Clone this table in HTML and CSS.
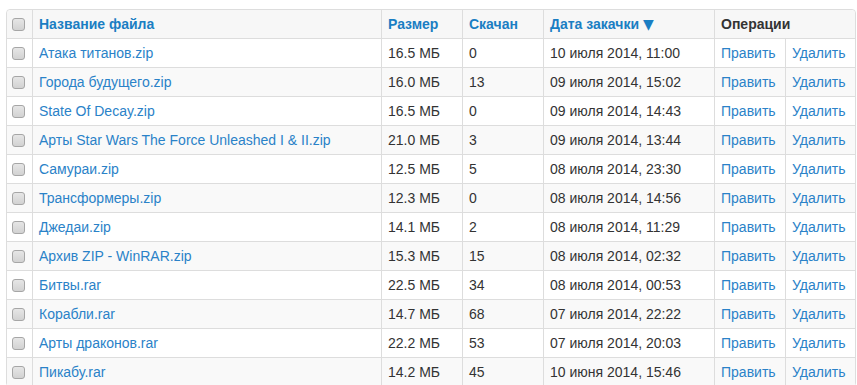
FILE: index.html
```html
<!DOCTYPE html>
<html lang="ru">
<head>
<meta charset="utf-8">
<link rel="stylesheet" href="styles.css">
</head>
<body>
<table class="files">
  <colgroup>
    <col class="c-check"><col class="c-name"><col class="c-size"><col class="c-dl"><col class="c-date"><col class="c-edit"><col class="c-del">
  </colgroup>
  <thead>
    <tr>
      <th class="chk"><input type="checkbox" class="box"></th>
      <th><a href="#">Название файла</a></th>
      <th><a href="#">Размер</a></th>
      <th><a href="#">Скачан</a></th>
      <th><a href="#">Дата закачки <span class="arrow">▼</span></a></th>
      <th colspan="2" class="ops">Операции</th>
    </tr>
  </thead>
  <tbody>
    <tr><td class="chk"><input type="checkbox" class="box"></td><td><a href="#">Атака титанов.zip</a></td><td>16.5 МБ</td><td>0</td><td>10 июля 2014, 11:00</td><td><a href="#">Править</a></td><td><a href="#">Удалить</a></td></tr>
    <tr><td class="chk"><input type="checkbox" class="box"></td><td><a href="#">Города будущего.zip</a></td><td>16.0 МБ</td><td>13</td><td>09 июля 2014, 15:02</td><td><a href="#">Править</a></td><td><a href="#">Удалить</a></td></tr>
    <tr><td class="chk"><input type="checkbox" class="box"></td><td><a href="#">State Of Decay.zip</a></td><td>16.5 МБ</td><td>0</td><td>09 июля 2014, 14:43</td><td><a href="#">Править</a></td><td><a href="#">Удалить</a></td></tr>
    <tr><td class="chk"><input type="checkbox" class="box"></td><td><a href="#">Арты Star Wars The Force Unleashed I &amp; II.zip</a></td><td>21.0 МБ</td><td>3</td><td>09 июля 2014, 13:44</td><td><a href="#">Править</a></td><td><a href="#">Удалить</a></td></tr>
    <tr><td class="chk"><input type="checkbox" class="box"></td><td><a href="#">Самураи.zip</a></td><td>12.5 МБ</td><td>5</td><td>08 июля 2014, 23:30</td><td><a href="#">Править</a></td><td><a href="#">Удалить</a></td></tr>
    <tr><td class="chk"><input type="checkbox" class="box"></td><td><a href="#">Трансформеры.zip</a></td><td>12.3 МБ</td><td>0</td><td>08 июля 2014, 14:56</td><td><a href="#">Править</a></td><td><a href="#">Удалить</a></td></tr>
    <tr><td class="chk"><input type="checkbox" class="box"></td><td><a href="#">Джедаи.zip</a></td><td>14.1 МБ</td><td>2</td><td>08 июля 2014, 11:29</td><td><a href="#">Править</a></td><td><a href="#">Удалить</a></td></tr>
    <tr><td class="chk"><input type="checkbox" class="box"></td><td><a href="#">Архив ZIP - WinRAR.zip</a></td><td>15.3 МБ</td><td>15</td><td>08 июля 2014, 02:32</td><td><a href="#">Править</a></td><td><a href="#">Удалить</a></td></tr>
    <tr><td class="chk"><input type="checkbox" class="box"></td><td><a href="#">Битвы.rar</a></td><td>22.5 МБ</td><td>34</td><td>08 июля 2014, 00:53</td><td><a href="#">Править</a></td><td><a href="#">Удалить</a></td></tr>
    <tr><td class="chk"><input type="checkbox" class="box"></td><td><a href="#">Корабли.rar</a></td><td>14.7 МБ</td><td>68</td><td>07 июля 2014, 22:22</td><td><a href="#">Править</a></td><td><a href="#">Удалить</a></td></tr>
    <tr><td class="chk"><input type="checkbox" class="box"></td><td><a href="#">Арты драконов.rar</a></td><td>22.2 МБ</td><td>53</td><td>07 июля 2014, 20:03</td><td><a href="#">Править</a></td><td><a href="#">Удалить</a></td></tr>
    <tr><td class="chk"><input type="checkbox" class="box"></td><td><a href="#">Пикабу.rar</a></td><td>14.2 МБ</td><td>45</td><td>10 июня 2014, 15:46</td><td><a href="#">Править</a></td><td><a href="#">Удалить</a></td></tr>
  </tbody>
</table>
</body>
</html>
```
FILE: styles.css
```css
html, body {
  margin: 0;
  padding: 0;
  background: #fff;
}
body {
  padding: 9px 0 0 6px;
  font-family: "Liberation Sans", Arial, sans-serif;
  font-size: 14px;
  color: #333;
}
.files {
  width: 850px;
  table-layout: fixed;
  border-collapse: separate;
  border-spacing: 0;
  border: 1px solid #ddd;
  border-radius: 4px;
}
.c-check { width: 25px; }
.c-name { width: 349px; }
.c-size { width: 81px; }
.c-dl { width: 81px; }
.c-date { width: 171px; }
.c-edit { width: 71px; }
.c-del { width: 70px; }

.files th,
.files td {
  height: 28px;
  padding: 0 6px;
  line-height: 20px;
  text-align: left;
  vertical-align: middle;
  white-space: nowrap;
  overflow: hidden;
  border-left: 1px solid #ddd;
  box-sizing: border-box;
}
.files td {
  border-top: 1px solid #ddd;
  height: 29px;
}
.files th:first-child,
.files td:first-child {
  border-left: none;
}
.files th {
  background: #f7f7f7;
  font-weight: bold;
}
.files th:first-child { border-top-left-radius: 4px; }
.files th:last-child { border-top-right-radius: 4px; }
.files tbody tr:nth-child(even) td {
  background: #f9f9f9;
}
.files a {
  color: #2a82c8;
  text-decoration: none;
}
.files th a {
  color: #1a7ec3;
}
.files th.ops {
  color: #333;
}
.arrow {
  font-size: 14px;
  font-family: "DejaVu Sans", sans-serif;
}
.files .chk {
  padding: 0;
  text-align: center;
}
.box {
  appearance: none;
  -webkit-appearance: none;
  display: block;
  width: 13px;
  height: 13px;
  margin: 0 0 0 5px;
  border: 1px solid #a6a6a6;
  border-radius: 3px;
  background: linear-gradient(#e6e6e6, #d2d2d2);
  box-sizing: border-box;
}
```
